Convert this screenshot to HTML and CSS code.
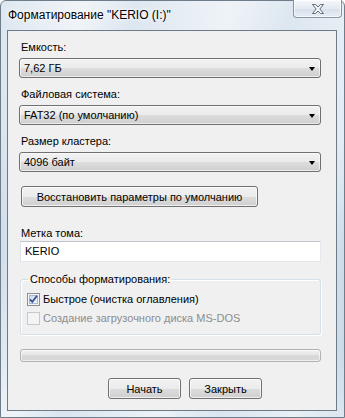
FILE: index.html
```html
<!DOCTYPE html>
<html lang="ru">
<head>
<meta charset="utf-8">
<title>Форматирование</title>
<link rel="stylesheet" href="styles.css">
</head>
<body>
<div class="window">
  <div class="titlebar">
    <span class="title">Форматирование "KERIO (I:)"</span>
    <span class="close">
      <svg width="16" height="12" viewBox="0 0 16 12"><path d="M2.5 1.5 L5.5 1.5 L8 4 L10.5 1.5 L13.5 1.5 L9.8 6 L13.5 10.5 L10.5 10.5 L8 8 L5.5 10.5 L2.5 10.5 L6.2 6 Z" fill="#f4f6f8" stroke="#5f6b77" stroke-width="1" stroke-linejoin="round"/></svg>
    </span>
  </div>
  <div class="client">
    <div class="label l-first">Емкость:</div>
    <div class="select"><span>7,62 ГБ</span><i class="arrow"></i></div>
    <div class="label">Файловая система:</div>
    <div class="select"><span>FAT32 (по умолчанию)</span><i class="arrow"></i></div>
    <div class="label">Размер кластера:</div>
    <div class="select"><span>4096 байт</span><i class="arrow"></i></div>
    <div class="btn btn-reset">Восстановить параметры по умолчанию</div>
    <div class="label l-volume">Метка тома:</div>
    <div class="input">KERIO</div>
    <fieldset class="group">
      <legend>Способы форматирования:</legend>
      <div class="check">
        <svg class="box" width="13" height="13" viewBox="0 0 13 13">
          <defs>
            <linearGradient id="cg" x1="0" y1="0" x2="1" y2="1">
              <stop offset="0" stop-color="#cbd9ec"/>
              <stop offset="1" stop-color="#f4f8fd"/>
            </linearGradient>
          </defs>
          <rect x="0.5" y="0.5" width="12" height="12" fill="#f6f6f6" stroke="#8f8f8f"/>
          <rect x="2.5" y="2.5" width="8" height="8" fill="url(#cg)" stroke="#a9bad0"/>
          <path d="M3 6.3 L5.3 8.8 L10 2.8" fill="none" stroke="#3a4f8c" stroke-width="1.8"/>
        </svg>
        <span>Быстрое (очистка оглавления)</span>
      </div>
      <div class="check disabled">
        <svg class="box" width="13" height="13" viewBox="0 0 13 13">
          <rect x="0.5" y="0.5" width="12" height="12" fill="#f4f4f4" stroke="#c9c9c9"/>
        </svg>
        <span>Создание загрузочного диска MS-DOS</span>
      </div>
    </fieldset>
    <div class="progress"></div>
    <div class="actions">
      <div class="btn btn-small">Начать</div>
      <div class="btn btn-small">Закрыть</div>
    </div>
  </div>
</div>
</body>
</html>
```

FILE: styles.css
```css
html, body {
  margin: 0;
  padding: 0;
}
body {
  width: 345px;
  height: 418px;
  overflow: hidden;
  font-family: "Liberation Sans", Arial, sans-serif;
  font-size: 11px;
  color: #000;
}
.window {
  box-sizing: border-box;
  width: 345px;
  height: 418px;
  display: flex;
  flex-direction: column;
  border: 1px solid #6f7d8a;
  border-radius: 6px 6px 0 0;
  background:
    linear-gradient(100deg, rgba(255,255,255,0) 0%, rgba(255,255,255,0.55) 20%, rgba(255,255,255,0) 32%, rgba(255,255,255,0.5) 55%, rgba(255,255,255,0) 70%, rgba(255,255,255,0.4) 88%, rgba(255,255,255,0) 100%),
    linear-gradient(180deg, #dfe8f1 0%, #d4e1ed 30%, #bcd1e4 60%, #c6d8e8 85%, #dbe6f0 100%);
}
.titlebar {
  height: 29px;
  display: flex;
  justify-content: space-between;
  align-items: flex-start;
  padding: 0 2px 0 7px;
}
.title {
  margin-top: 7px;
  line-height: 15px;
  font-size: 12px;
  text-shadow: 0 0 6px #fff, 0 0 3px #fff;
}
.close {
  width: 49px;
  height: 18px;
  margin-top: -1px;
  box-sizing: border-box;
  border: 1px solid #8795a3;
  border-top: none;
  border-radius: 0 0 4px 4px;
  background: linear-gradient(180deg, #f5f8fb 0%, #e3eaf1 50%, #d6e0ea 51%, #e6edf4 100%);
  box-shadow: inset 0 0 0 1px rgba(255,255,255,0.7);
  display: flex;
  align-items: center;
  justify-content: center;
}
.client {
  flex: 1;
  margin: 0 7px 6px 6px;
  border: 1px solid #6d7b89;
  background: #f0f0f0;
  padding: 9px 15px 0 12px;
  display: flex;
  flex-direction: column;
}
.label {
  line-height: 15px;
  height: 15px;
  margin-top: 9px;
  padding-left: 1px;
}
.l-first {
  margin-top: 0;
}
.l-volume {
  margin-top: 19px;
}
.select {
  box-sizing: border-box;
  height: 20px;
  margin-top: 3px;
  margin-left: -1px;
  border: 1px solid #707070;
  border-radius: 3px;
  background: linear-gradient(180deg, #f2f2f2 0%, #ebebeb 50%, #dddddd 51%, #cfcfcf 100%);
  box-shadow: inset 0 0 0 1px rgba(255,255,255,0.6);
  display: flex;
  align-items: center;
  justify-content: space-between;
  padding: 0 5px 0 4px;
  line-height: 16px;
}
.arrow {
  width: 0;
  height: 0;
  border-left: 3.5px solid transparent;
  border-right: 3.5px solid transparent;
  border-top: 4px solid #000;
  margin-top: 1px;
}
.btn {
  box-sizing: border-box;
  height: 21px;
  border: 1px solid #707070;
  border-radius: 3px;
  background: linear-gradient(180deg, #f2f2f2 0%, #ebebeb 50%, #dddddd 51%, #cfcfcf 100%);
  box-shadow: inset 0 0 0 1px rgba(255,255,255,0.7);
  display: flex;
  align-items: center;
  justify-content: center;
  line-height: 16px;
}
.btn-reset {
  width: 237px;
  margin-top: 14px;
  margin-left: 1px;
}
.input {
  box-sizing: border-box;
  height: 21px;
  background: #fff;
  border: 1px solid #e3e9ef;
  border-top-color: #c2c6cc;
  border-left-color: #dfe3e8;
  padding: 0 4px;
  line-height: 19px;
}
.group {
  margin: 10px 0 0 0;
  padding: 4px 6px 8px 6px;
  border: 1px solid #d5dfe5;
  border-radius: 3px;
  box-shadow: inset 1px 1px 0 #fff, 1px 1px 0 #fff;
  display: flex;
  flex-direction: column;
  gap: 3px;
  min-width: 0;
}
.group legend {
  padding: 0 2px;
  margin-left: 1px;
  line-height: 15px;
}
.check {
  display: flex;
  align-items: center;
  gap: 3px;
  height: 16px;
  line-height: 16px;
}
.box {
  flex: none;
}
.check.disabled {
  color: #8d8d8d;
}
.progress {
  box-sizing: border-box;
  height: 13px;
  margin-top: 14px;
  border: 1px solid #b2b2b2;
  border-radius: 3px;
  background: linear-gradient(180deg, #f3f3f3 0%, #e4e4e4 45%, #d6d6d6 55%, #d9d9d9 100%);
  box-shadow: inset 0 0 0 1px rgba(255,255,255,0.6);
}
.actions {
  display: flex;
  gap: 8px;
  margin-top: 16px;
  padding-left: 88px;
}
.btn-small {
  width: 73px;
}
```
